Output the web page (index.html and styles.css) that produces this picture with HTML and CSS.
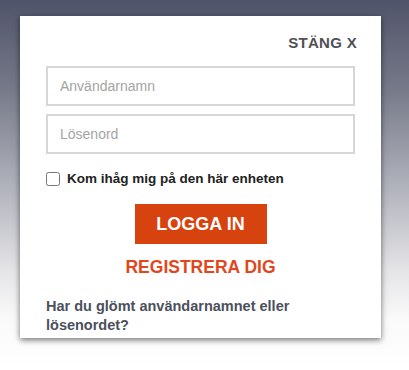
FILE: index.html
```html
<!DOCTYPE html>
<html lang="sv">
<head>
  <meta charset="UTF-8">
  <meta name="viewport" content="width=device-width, initial-scale=1.0">
  <title>Logga in</title>
  <link rel="stylesheet" href="styles.css">
</head>
<body>

  <div class="login-box">
    <div class="close-row">
      <a href="#" class="close-link">STÄNG X</a>
    </div>

    <form id="loginForm">
      <input type="text" class="field" placeholder="Användarnamn">
      <input type="password" class="field" placeholder="Lösenord">

      <label class="remember">
        <input type="checkbox" class="remember-box">
        <span>Kom ihåg mig på den här enheten</span>
      </label>

      <div class="actions">
        <button type="submit" class="login-btn">LOGGA IN</button>
        <a href="#" class="register-link">REGISTRERA DIG</a>
      </div>
    </form>

    <a href="#" class="forgot-link">Har du glömt användarnamnet eller lösenordet?</a>
  </div>

</body>
</html>
```

FILE: styles.css
```css
body {
  margin: 0;
  height: 370px;
  font-family: "Liberation Sans", Arial, sans-serif;
  background: linear-gradient(to bottom, #50546a 0, #777a89 90px, #acaeb8 180px, #e4e4e7 270px, #fafafa 320px, #ffffff 370px);
  overflow: hidden;
}
.login-box {
  width: 309px;
  height: 322px;
  margin: 16px 0 0 20px;
  padding: 0 26px;
  background: #fff;
  box-shadow: 0 2px 6px rgba(0, 0, 0, 0.55);
  overflow: hidden;
}
.close-row {
  display: flex;
  justify-content: flex-end;
  padding: 18px 0 0 0;
}
.close-link {
  margin-right: -2px;
  font-size: 15px;
  font-weight: bold;
  color: #505055;
  text-decoration: none;
  letter-spacing: 0.3px;
}
form {
  margin-top: 15px;
}
.field {
  display: block;
  box-sizing: border-box;
  width: 309px;
  height: 40px;
  margin-bottom: 8px;
  padding: 0 12px;
  border: 2px solid #d6d6d6;
  font-family: "Liberation Sans", Arial, sans-serif;
  font-size: 14px;
  color: #333;
  outline: none;
}
.field::placeholder {
  color: #a4a4a4;
}
.remember {
  display: flex;
  align-items: center;
  gap: 7px;
  margin-top: 17px;
  font-size: 13.5px;
  font-weight: bold;
  color: #222;
}
.remember-box {
  width: 14px;
  height: 14px;
  margin: 0;
}
.actions {
  display: flex;
  flex-direction: column;
  align-items: center;
  margin-top: 18px;
}
.login-btn {
  width: 132px;
  height: 40px;
  border: none;
  background: #d7430f;
  color: #fff;
  font-family: "Liberation Sans", Arial, sans-serif;
  font-size: 18px;
  font-weight: bold;
  cursor: pointer;
}
.register-link {
  margin-top: 13px;
  font-size: 17.5px;
  font-weight: bold;
  color: #e2471c;
  text-decoration: none;
}
.forgot-link {
  display: block;
  width: 270px;
  margin-top: 19px;
  font-size: 14.5px;
  font-weight: bold;
  line-height: 19px;
  color: #4b505c;
  text-decoration: none;
}
```
